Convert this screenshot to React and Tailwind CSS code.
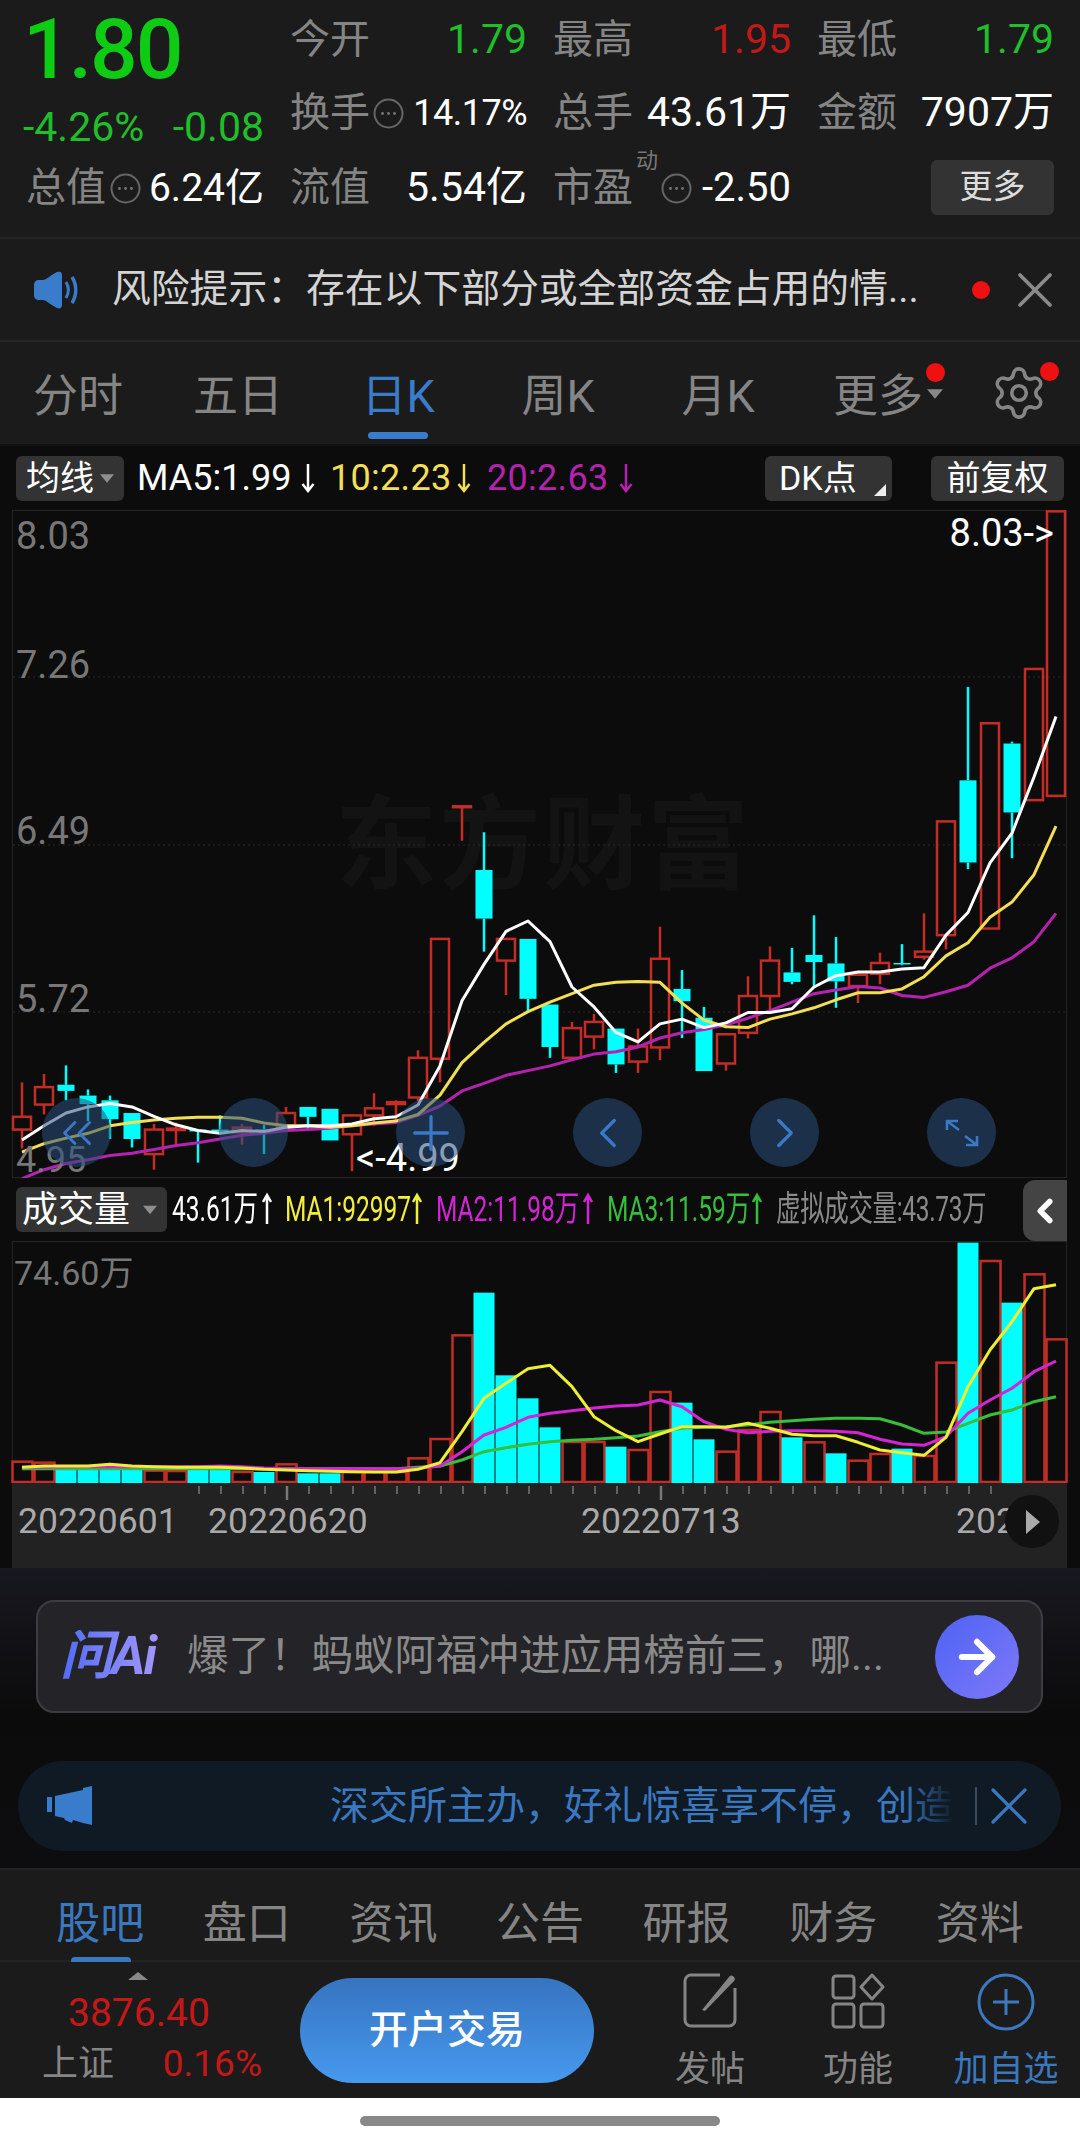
import React from 'react';
import { Settings, X, ChevronLeft, ChevronRight, ChevronsLeft, Plus, ArrowRight } from 'lucide-react';

// price chart data, measured off the picture: [high, top, bottom, low, up]
const candles = [
  [1340, 1413, 1440, 1480, 1], [1322, 1350, 1387, 1408, 1], [1304, 1345, 1358, 1378, 0], [1355, 1368, 1386, 1422, 0],
  [1368, 1378, 1418, 1460, 0], [1405, 1405, 1460, 1478, 0], [1428, 1440, 1492, 1525, 1], [1425, 1438, 1441, 1475, 1],
  [1440, 1440, 1444, 1510, 0], [1410, 1440, 1444, 1450, 0], [1428, 1436, 1446, 1472, 1], [1430, 1440, 1445, 1492, 0],
  [1392, 1405, 1435, 1440, 1], [1392, 1392, 1413, 1440, 0], [1396, 1396, 1463, 1463, 0], [1408, 1410, 1450, 1528, 1],
  [1363, 1395, 1410, 1432, 1], [1378, 1382, 1386, 1420, 1], [1272, 1288, 1372, 1380, 1], [1036, 1036, 1290, 1340, 1],
  [753, 755, 757, 828, 1], [810, 890, 993, 1063, 0], [1036, 1036, 1082, 1155, 1], [1036, 1036, 1163, 1190, 0],
  [1175, 1175, 1265, 1288, 0], [1212, 1225, 1288, 1290, 1], [1195, 1212, 1243, 1270, 1], [1226, 1226, 1302, 1320, 0],
  [1226, 1264, 1296, 1320, 1], [1010, 1078, 1266, 1293, 1], [1102, 1142, 1168, 1246, 0], [1180, 1203, 1316, 1316, 0],
  [1236, 1238, 1300, 1315, 1], [1115, 1157, 1235, 1247, 1], [1052, 1082, 1157, 1190, 1], [1055, 1107, 1127, 1132, 0],
  [986, 1070, 1085, 1140, 0], [1032, 1088, 1126, 1182, 0], [1105, 1112, 1136, 1172, 1], [1065, 1087, 1110, 1132, 1],
  [1047, 1087, 1090, 1092, 0], [982, 1063, 1074, 1080, 1], [787, 787, 1028, 1058, 1], [502, 700, 874, 888, 0],
  [579, 579, 1014, 1014, 1], [618, 622, 768, 865, 0], [464, 464, 742, 742, 1], [130, 130, 733, 733, 1],
];

const maWhite = [1462, 1432, 1405, 1392, 1385, 1392, 1412, 1430, 1442, 1448, 1442, 1444, 1435, 1432, 1432, 1428, 1417, 1413, 1388, 1305, 1167, 1090, 1020, 998, 1042, 1138, 1180, 1234, 1254, 1216, 1206, 1224, 1214, 1192, 1192, 1184, 1138, 1114, 1106, 1106, 1100, 1097, 1028, 980, 875, 812, 693, 565];
const maYellow = [1488, 1470, 1458, 1448, 1432, 1425, 1420, 1416, 1414, 1414, 1416, 1426, 1432, 1432, 1435, 1432, 1426, 1422, 1408, 1367, 1298, 1255, 1216, 1190, 1170, 1152, 1134, 1128, 1126, 1128, 1172, 1208, 1222, 1224, 1206, 1195, 1182, 1165, 1150, 1150, 1142, 1116, 1072, 1044, 990, 958, 900, 797];
const maPurple = [1544, 1525, 1512, 1504, 1495, 1490, 1482, 1474, 1468, 1460, 1452, 1448, 1442, 1440, 1437, 1432, 1428, 1425, 1410, 1390, 1358, 1342, 1325, 1315, 1305, 1292, 1280, 1275, 1265, 1246, 1235, 1228, 1218, 1204, 1188, 1170, 1152, 1144, 1137, 1140, 1156, 1160, 1148, 1134, 1098, 1076, 1042, 982];

// volume chart: [top, up]
const volumes = [
  [845, 1], [848, 1], [868, 0], [868, 0], [868, 0], [868, 0], [872, 1], [873, 1], [868, 0], [868, 0], [876, 1], [876, 0],
  [853, 1], [880, 0], [880, 0], [876, 1], [876, 1], [876, 1], [835, 1], [777, 1], [466, 1], [338, 0], [586, 0], [655, 0],
  [742, 0], [786, 1], [786, 1], [800, 0], [810, 1], [636, 1], [668, 0], [778, 0], [815, 1], [750, 1], [696, 1], [772, 0],
  [787, 1], [820, 0], [842, 1], [822, 1], [806, 0], [828, 1], [548, 1], [188, 0], [243, 1], [368, 0], [283, 1], [478, 1],
];
const volYellow = [862, 858, 858, 858, 853, 858, 860, 862, 862, 862, 864, 868, 870, 872, 874, 875, 876, 876, 868, 848, 755, 655, 610, 566, 556, 620, 710, 752, 785, 762, 740, 740, 742, 730, 745, 763, 767, 767, 787, 810, 818, 826, 772, 620, 510, 425, 326, 314];
const volPurple = [862, 862, 860, 860, 860, 860, 860, 860, 860, 858, 860, 864, 866, 866, 866, 866, 866, 866, 865, 858, 815, 765, 742, 712, 700, 692, 684, 678, 675, 660, 680, 725, 748, 758, 754, 752, 752, 754, 758, 778, 792, 796, 770, 700, 660, 625, 575, 543];
const volGreen = [866, 866, 866, 866, 866, 866, 866, 866, 866, 866, 866, 866, 866, 866, 866, 866, 866, 866, 862, 858, 840, 815, 803, 793, 785, 781, 778, 773, 768, 755, 745, 742, 740, 735, 727, 722, 718, 715, 715, 716, 735, 760, 756, 730, 705, 690, 665, 650];

const slotX = (i) => 22 + 22 * i;
const priceY = (v) => v / 2.119 - 60;
const volY = (v) => v / 3 - 61;

const RED = '#c42c26';
const CYAN = '#00ffff';

const linePoints = (values, toY) => values.map((v, i) => `${slotX(i)},${toY(v).toFixed(1)}`).join(' ');

const MaLine = ({ values, toY, color }) => (
  <polyline points={linePoints(values, toY)} fill="none" stroke={color} strokeWidth="3" strokeLinejoin="round" />
);

const InfoDot = () => (
  <svg className="w-[31px] h-[31px] shrink-0" viewBox="0 0 31 31" fill="none">
    <circle cx="15.5" cy="15.5" r="14" stroke="#666" strokeWidth="2" />
    <circle cx="9.5" cy="15.5" r="1.4" fill="#777" />
    <circle cx="15.5" cy="15.5" r="1.4" fill="#777" />
    <circle cx="21.5" cy="15.5" r="1.4" fill="#777" />
  </svg>
);

const Label = ({ children }) => <span className="text-[40px] text-[#858585] leading-none">{children}</span>;

const Cell = ({ label, children }) => (
  <div className="flex items-center justify-between pr-[26px]">
    <Label>{label}</Label>
    {children}
  </div>
);

const Caret = ({ className }) => (
  <svg className={className} viewBox="0 0 20 12">
    <path d="M0 0h20L10 12z" fill="currentColor" />
  </svg>
);

const DownArrow = ({ color }) => (
  <svg className="w-[14px] h-[32px] shrink-0" viewBox="0 0 14 32" fill="none" stroke={color} strokeWidth="2.5">
    <path d="M7 2v27M1.5 22L7 29l5.500-7" />
  </svg>
);

const UpArrow = ({ color }) => (
  <svg className="w-[10px] h-[34px] shrink-0" viewBox="0 0 10 34" fill="none" stroke={color} strokeWidth="2.5">
    <path d="M5 32V3M1 10l4-7 4 7" />
  </svg>
);

const VolItem = ({ width, color, className = '', children }) => (
  <div className="shrink-0 flex items-center" style={{ width }}>
    <span className={`inline-block whitespace-nowrap origin-left scale-x-[0.7] text-[35px] leading-none ${className}`} style={{ color }}>
      {children}
    </span>
  </div>
);

const tabs = [
  { name: '分时' },
  { name: '五日' },
  { name: '日K', active: true },
  { name: '周K' },
  { name: '月K' },
  { name: '更多', more: true },
];

const bottomTabs = ['股吧', '盘口', '资讯', '公告', '研报', '财务', '资料'];

const overlayButtons = [
  { x: 'left-[42px]', icon: <ChevronsLeft size={50} strokeWidth={1.4} /> },
  { x: 'left-[219px]', icon: null },
  { x: 'left-[396px]', icon: <Plus size={56} strokeWidth={1.4} /> },
  { x: 'left-[573px]', icon: <ChevronLeft size={50} strokeWidth={1.6} /> },
  { x: 'left-[750px]', icon: <ChevronRight size={50} strokeWidth={1.6} /> },
  {
    x: 'left-[927px]',
    icon: (
      <svg className="w-[36px] h-[30px]" viewBox="0 0 36 30" fill="none" stroke="currentColor" strokeWidth="2.6">
        <path d="M3 12V3h11M3 3l12 9M33 18v9H22M33 27l-12-9" />
      </svg>
    ),
  },
];

const PriceChart = () => (
  <svg className="absolute inset-0 w-full h-full" viewBox="0 0 1080 668">
    <rect x="12.500" y="0.500" width="1054" height="667" fill="none" stroke="#242424" />
    {[167, 335, 502].map((y) => (
      <line key={y} x1="13" x2="1066" y1={y} y2={y} stroke="#2b2b2b" strokeDasharray="2 3" />
    ))}
    {candles.map(([high, top, bottom, low, up], i) => {
      const x = slotX(i);
      const color = up ? RED : CYAN;
      return (
        <g key={i}>
          <line x1={x} x2={x} y1={priceY(high)} y2={priceY(top)} stroke={color} strokeWidth="2.5" />
          <line x1={x} x2={x} y1={priceY(bottom)} y2={priceY(low)} stroke={color} strokeWidth="2.5" />
          {up ? (
            <rect x={x - 9} y={priceY(top)} width="18" height={priceY(bottom) - priceY(top)} fill="none" stroke={color} strokeWidth="2.5" />
          ) : (
            <rect x={x - 8.500} y={priceY(top)} width="17" height={Math.max(priceY(bottom) - priceY(top), 1.500)} fill={color} />
          )}
        </g>
      );
    })}
    <MaLine values={maPurple} toY={priceY} color="#b522b0" />
    <MaLine values={maYellow} toY={priceY} color="#f3df55" />
    <MaLine values={maWhite} toY={priceY} color="#ffffff" />
  </svg>
);

const VolumeChart = () => (
  <svg className="absolute inset-0 w-full h-full" viewBox="0 0 1080 242">
    <rect x="12.500" y="0.500" width="1054" height="242" fill="none" stroke="#242424" />
    {volumes.map(([top, up], i) => {
      const x = slotX(i);
      const y = volY(top);
      return up ? (
        <rect key={i} x={x - 9.500} y={y} width="20" height={241 - y} fill="none" stroke={RED} strokeWidth="2.5" />
      ) : (
        <rect key={i} x={x - 10.500} y={y} width="21" height={243 - y} fill={CYAN} />
      );
    })}
    <MaLine values={volGreen} toY={volY} color="#38bd3c" />
    <MaLine values={volPurple} toY={volY} color="#d524d6" />
    <MaLine values={volYellow} toY={volY} color="#eeee33" />
  </svg>
);

export default function App() {
  return (
    <div className="w-[1080px] h-[2146px] flex flex-col overflow-hidden bg-white font-[Roboto,'Noto_Sans_CJK_SC',sans-serif]">
      {/* Quote block */}
      <div className="h-[237px] shrink-0 bg-[#1b1b1b] pt-[3px] pl-[26px] grid grid-cols-[264px_263px_264px_237px] grid-rows-[73px_74px_76px]">
        <div className="relative">
          <span className="absolute -left-[3px] top-[5px] text-[84px] leading-[84px] font-medium text-[#0ecb14] tracking-[-2px]">1.80</span>
        </div>
        <Cell label="今开"><span className="text-[41px] text-[#1fbf2a]">1.79</span></Cell>
        <Cell label="最高"><span className="text-[41px] text-[#c41818]">1.95</span></Cell>
        <Cell label="最低"><span className="text-[41px] text-[#1fbf2a] -mr-[26px]">1.79</span></Cell>

        <div className="flex items-end justify-between pr-[26px] -ml-[3px] pb-[2px] text-[41px] leading-none text-[#1fbf2a]">
          <span>-4.26%</span>
          <span>-0.08</span>
        </div>
        <Cell label="换手">
          <div className="flex items-center gap-[9px] -ml-[6px]">
            <InfoDot />
            <span className="text-[36px] text-white tracking-[-0.5px]">14.17%</span>
          </div>
        </Cell>
        <Cell label="总手"><span className="text-[41px] text-white">43.61万</span></Cell>
        <Cell label="金额"><span className="text-[41px] text-white -mr-[26px]">7907万</span></Cell>

        <Cell label="总值">
          <div className="flex items-center gap-[8px] -ml-[8px]">
            <InfoDot />
            <span className="text-[39px] text-white">6.24亿</span>
          </div>
        </Cell>
        <Cell label="流值"><span className="text-[41px] text-white">5.54亿</span></Cell>
        <Cell label="市盈">
          <div className="relative flex items-center gap-[10px] pl-[24px] -ml-[6px]">
            <span className="absolute -left-[1px] -top-[8px] text-[22px] leading-none text-[#777]">动</span>
            <InfoDot />
            <span className="text-[40px] text-white">-2.50</span>
          </div>
        </Cell>
        <div className="flex items-center justify-end">
          <div className="w-[123px] h-[55px] rounded-md bg-[#333] flex items-center justify-center text-[33px] text-[#ddd] -mt-[2px]">更多</div>
        </div>
      </div>

      {/* Risk banner */}
      <div className="h-[105px] shrink-0 bg-[#1b1b1b] border-y-2 border-[#252525] flex items-center pl-[33px] pr-[15px]">
        <svg className="w-[46px] h-[38px] shrink-0" viewBox="0 0 46 38" fill="none">
          <path d="M1 14c0-3 2-5 5-5h4c3 0 8-5 14-8 3-1 5 0 5 3v30c0 3-2 4-5 3-6-3-11-8-14-8H6c-3 0-5-2-5-5z" fill="#3a7ccc" />
          <path d="M33 11c3 5 3 11 0 16" stroke="#3a7ccc" strokeWidth="3" />
          <path d="M39 6c5 8 5 18 0 26" stroke="#3a7ccc" strokeWidth="3.500" />
        </svg>
        <span className="ml-[33px] text-[38.800px] text-[#d4d4d4] whitespace-nowrap">风险提示：存在以下部分或全部资金占用的情...</span>
        <div className="ml-auto flex items-center gap-[15px]">
          <div className="w-[18px] h-[18px] rounded-full bg-[#ee1111]" />
          <X size={60} strokeWidth={1.5} className="text-[#8a8a8a]" />
        </div>
      </div>

      {/* Period tabs */}
      <div className="h-[104px] shrink-0 bg-[#1b1b1b] border-b-2 border-[#111] flex items-stretch -ml-[2px]">
        {tabs.map((t) => (
          <div key={t.name} className={`relative w-[160px] pt-[8px] flex items-center justify-center text-[45px] ${t.active ? 'text-[#3a7ccc]' : 'text-[#858585]'}`}>
            {t.name}
            {t.active && <div className="absolute bottom-[5px] left-[50px] w-[60px] h-[7px] rounded-sm bg-[#3a7ccc]" />}
            {t.more && <div className="absolute top-[21px] right-[13px] w-[19px] h-[19px] rounded-full bg-[#ee1111]" />}
            {t.more && <Caret className="absolute top-[46px] right-[15px] w-[16px] h-[12px] text-[#888]" />}
          </div>
        ))}
        <div className="relative flex-1 flex items-center">
          <Settings size={58} strokeWidth={1.5} className="ml-[32px] text-[#858585]" />
          <div className="absolute top-[20px] right-[21px] w-[19px] h-[19px] rounded-full bg-[#ee1111]" />
        </div>
      </div>

      {/* MA legend */}
      <div className="h-[64px] shrink-0 bg-[#0c0c0c] flex items-center pl-[16px] pr-[16px] text-[36px]">
        <div className="w-[108px] h-[45px] rounded-md bg-[#333] flex items-center justify-between pl-[10px] pr-[10px] text-[34px] text-white">
          均线<Caret className="w-[14px] h-[9px] text-[#8f8f8f]" />
        </div>
        <span className="ml-[13px] w-[152px] text-white whitespace-nowrap">MA5:1.99</span>
        <span className="ml-[12px]"><DownArrow color="#fff" /></span>
        <span className="ml-[15px] w-[118px] text-[#f3df55] tracking-[0.3px] whitespace-nowrap">10:2.23</span>
        <span className="ml-[9px]"><DownArrow color="#f3df55" /></span>
        <span className="ml-[16px] w-[118px] text-[#b522b0] tracking-[0.3px] whitespace-nowrap">20:2.63</span>
        <span className="ml-[14px]"><DownArrow color="#b522b0" /></span>
        <div className="ml-auto w-[127px] h-[45px] rounded-md bg-[#333] relative flex items-center pl-[14px] text-[34px] text-white">
          DK点
          <svg className="absolute right-[6px] bottom-[5px] w-[12px] h-[12px]" viewBox="0 0 12 12"><path d="M12 0v12H0z" fill="#eee" /></svg>
        </div>
        <div className="ml-[39px] w-[133px] h-[45px] rounded-md bg-[#333] flex items-center justify-center text-[34px] text-white">前复权</div>
      </div>

      {/* Price chart */}
      <div className="relative h-[668px] shrink-0 bg-[#0c0c0c]">
        <div className="absolute left-[335px] top-[276px] text-[102px] leading-none font-bold text-[#131313] tracking-[2px] font-['Noto_Sans_CJK_SC',sans-serif]">东方财富</div>
        <PriceChart />
        <span className="absolute left-[16px] top-[7px] text-[38px] leading-none text-[#777]">8.03</span>
        <span className="absolute left-[16px] top-[136px] text-[38px] leading-none text-[#777]">7.26</span>
        <span className="absolute left-[16px] top-[302px] text-[38px] leading-none text-[#777]">6.49</span>
        <span className="absolute left-[16px] top-[470px] text-[38px] leading-none text-[#777]">5.72</span>
        <span className="absolute left-[16px] top-[632px] text-[36px] leading-[36px] text-[#777]">4.95</span>
        <span className="absolute right-[26px] top-[1px] text-[38px] leading-[44px] text-white">8.03-&gt;</span>
        <span className="absolute left-[356px] top-[629px] text-[38px] leading-none text-white">&lt;-4.99</span>
        {overlayButtons.map((b) => (
          <div key={b.x} className={`absolute top-[588px] w-[69px] h-[69px] rounded-full bg-[#2a4f7c]/55 flex items-center justify-center text-[#3a78c8] ${b.x}`}>
            {b.icon}
          </div>
        ))}
      </div>

      {/* Volume legend */}
      <div className="relative h-[63px] shrink-0 bg-[#0c0c0c] flex items-center pl-[16px]">
        <div className="w-[151px] h-[45px] mr-[5px] rounded-md bg-[#333] flex items-center justify-between pl-[6px] pr-[10px] text-[36px] text-white">
          成交量<Caret className="w-[14px] h-[10px] text-[#8f8f8f]" />
        </div>
        <VolItem width={113} color="#ffffff">43.61万</VolItem>
        <VolItem width={151} color="#f2ee3c">MA1:92997</VolItem>
        <VolItem width={171} color="#d524d6">MA2:11.98万</VolItem>
        <VolItem width={169} color="#38bd3c">MA3:11.59万</VolItem>
        <VolItem width={240} color="#8a8a8a" className="tracking-[-0.5px]">虚拟成交量:43.73万</VolItem>
        <div className="absolute left-[262px] top-[14px]"><UpArrow color="#fff" /></div>
        <div className="absolute left-[412px] top-[14px]"><UpArrow color="#f2ee3c" /></div>
        <div className="absolute left-[583px] top-[14px]"><UpArrow color="#d524d6" /></div>
        <div className="absolute left-[752px] top-[14px]"><UpArrow color="#38bd3c" /></div>
        <div className="absolute right-[13px] top-[2px] bottom-0 w-[44px] rounded-l-xl bg-[#444] flex items-center justify-center">
          <ChevronLeft size={38} strokeWidth={3.500} className="text-white" />
        </div>
      </div>

      {/* Volume chart */}
      <div className="relative h-[242px] shrink-0 bg-[#0c0c0c] overflow-hidden">
        <VolumeChart />
        <span className="absolute left-[14px] top-[15px] text-[34px] leading-none text-[#777]">74.60万</span>
      </div>

      {/* Date axis */}
      <div className="h-[85px] shrink-0 bg-[#0c0c0c] pl-[12px] pr-[13px]">
        <div className="relative h-full bg-[#222] overflow-hidden">
          <svg className="absolute inset-0 w-full h-[20px]" viewBox="0 0 1055 20">
            {Array.from({ length: 37 }, (_, i) => {
              const x = 187 + 22 * i;
              const long = x === 275 || x === 649;
              return <line key={i} x1={x} x2={x} y1="3" y2={long ? 17 : 11} stroke="#777" strokeWidth={long ? 2.500 : 1.500} />;
            })}
          </svg>
          <span className="absolute left-[6px] top-[20px] text-[35.500px] leading-[36px] text-[#aaa]">20220601</span>
          <span className="absolute left-[196px] top-[20px] text-[35.500px] leading-[36px] text-[#aaa]">20220620</span>
          <span className="absolute left-[569px] top-[20px] text-[35.500px] leading-[36px] text-[#aaa]">20220713</span>
          <span className="absolute left-[944px] top-[20px] text-[35.500px] leading-[36px] text-[#aaa]">202</span>
          <div className="absolute left-[993px] top-[12px] w-[54px] h-[53px] rounded-full bg-[#111] flex items-center justify-center">
            <svg className="ml-[2px] w-[14px] h-[24px]" viewBox="0 0 14 24"><path d="M0 0l14 12L0 24z" fill="#aaa" /></svg>
          </div>
        </div>
      </div>

      {/* Ads */}
      <div className="h-[300px] shrink-0 bg-gradient-to-b from-[#181820] via-[#0b0b0b] via-50% to-[#0d0d0f] pt-[32px] relative">
        <div className="mx-[36px] w-[1007px] h-[113px] rounded-[18px] border-2 border-[#3c3c42] bg-[#242428] flex items-center pl-[22px] pr-[22px]">
          <span className="w-[100px] shrink-0 text-[53px] leading-none font-bold italic tracking-[-2px] bg-gradient-to-r from-[#4f6bf5] to-[#a596ff] bg-clip-text text-transparent whitespace-nowrap">问Ai</span>
          <span className="ml-[27px] text-[41.500px] text-[#8a8a8a] whitespace-nowrap">爆了！蚂蚁阿福冲进应用榜前三，哪...</span>
          <div className="ml-auto w-[84px] h-[84px] rounded-full bg-gradient-to-br from-[#4c63f3] to-[#7f78f8] flex items-center justify-center">
            <ArrowRight size={52} strokeWidth={2.800} className="text-white" />
          </div>
        </div>
        <div className="relative mt-[48px] mx-[18px] w-[1043px] h-[90px] rounded-full bg-[#101a24] flex items-center pl-[29px] pr-[20px]">
          <svg className="w-[46px] h-[40px] shrink-0" viewBox="0 0 46 40">
            <path d="M0 11h5v15H0zM8 10L36 4V2l9-2v39l-9-2-10-3-1 3-7-3-1-2-9-2z" fill="#3a7ccc" />
          </svg>
          <div className="relative ml-auto w-[624px] overflow-hidden whitespace-nowrap text-[39px] text-[#3a78c0]">
            深交所主办，好礼惊喜享不停，创造
            <div className="absolute right-0 inset-y-0 w-[50px] bg-gradient-to-r from-transparent to-[#101a24]" />
          </div>
          <div className="ml-[21px] w-[2px] h-[38px] bg-[#3b4a5c]" />
          <X size={64} strokeWidth={1.2} className="text-[#3a78c0] shrink-0" />
        </div>
      </div>

      {/* Detail tabs */}
      <div className="h-[94px] shrink-0 bg-[#1b1b1b] border-y-2 border-[#232323] px-[27px] flex">
        {bottomTabs.map((name, i) => (
          <div key={name} className={`relative flex-1 pt-[18px] flex items-center justify-center text-[44px] ${i === 0 ? 'text-[#3a78c0]' : 'text-[#858585]'}`}>
            {name}
            {i === 0 && <div className="absolute bottom-[-2px] left-[44px] w-[60px] h-[5px] rounded-t bg-[#3a78c0]" />}
          </div>
        ))}
      </div>

      {/* Bottom bar */}
      <div className="h-[136px] shrink-0 bg-[#1b1b1b] flex items-stretch">
        <div className="w-[300px] shrink-0 flex flex-col pl-[42px] pr-[38px] pt-[10px]">
          <svg className="ml-[86px] w-[20px] h-[8px]" viewBox="0 0 20 8"><path d="M10 0l10 8H0z" fill="#888" /></svg>
          <span className="ml-[26px] mt-[10px] text-[39px] leading-[46px] text-[#c41818]">3876.40</span>
          <div className="flex items-center justify-between mt-[2px] leading-[52px]">
            <span className="text-[36px] text-[#858585]">上证</span>
            <span className="text-[37px] text-[#c41818]">0.16%</span>
          </div>
        </div>
        <div className="self-start mt-[16px] w-[294px] h-[105px] rounded-full bg-gradient-to-b from-[#3674c0] to-[#4799ef] flex items-center justify-center text-[39px] font-medium text-white">开户交易</div>
        <div className="flex-1 flex gap-[38px] pl-[61px] pt-[11px]">
          <div className="w-[110px] flex flex-col items-center text-[#858585]">
            <svg className="w-[56px] h-[56px]" viewBox="0 0 56 56" fill="none" stroke="currentColor" strokeWidth="3">
              <path d="M38 2H9a6 6 0 0 0-6 6v39a6 6 0 0 0 6 6h38a6 6 0 0 0 6-6V15" />
              <path d="M20 37l27-33a3 3 0 0 1 5 4L23 38z" fill="currentColor" stroke="none" />
            </svg>
            <span className="mt-[16px] text-[35px] leading-[50px]">发帖</span>
          </div>
          <div className="w-[110px] flex flex-col items-center text-[#858585]">
            <svg className="w-[54px] h-[56px]" viewBox="0 0 54 56" fill="none" stroke="currentColor" strokeWidth="3">
              <rect x="2" y="3" width="21" height="22" rx="3" />
              <rect x="2" y="31" width="21" height="23" rx="3" />
              <rect x="30" y="31" width="22" height="23" rx="3" />
              <path d="M41 2l11 12-11 12-11-12z" strokeLinejoin="round" />
            </svg>
            <span className="mt-[16px] text-[35px] leading-[50px]">功能</span>
          </div>
          <div className="w-[110px] flex flex-col items-center text-[#3a78c0]">
            <svg className="w-[58px] h-[58px]" viewBox="0 0 58 58" fill="none" stroke="currentColor" strokeWidth="3">
              <circle cx="29" cy="29" r="27" />
              <path d="M29 16v26M16 29h26" />
            </svg>
            <span className="mt-[14px] text-[35px] leading-[50px] whitespace-nowrap">加自选</span>
          </div>
        </div>
      </div>

      {/* Home indicator */}
      <div className="flex-1 bg-white flex justify-center pt-[18px]">
        <div className="w-[360px] h-[10px] rounded-full bg-[#888]" />
      </div>
    </div>
  );
}
